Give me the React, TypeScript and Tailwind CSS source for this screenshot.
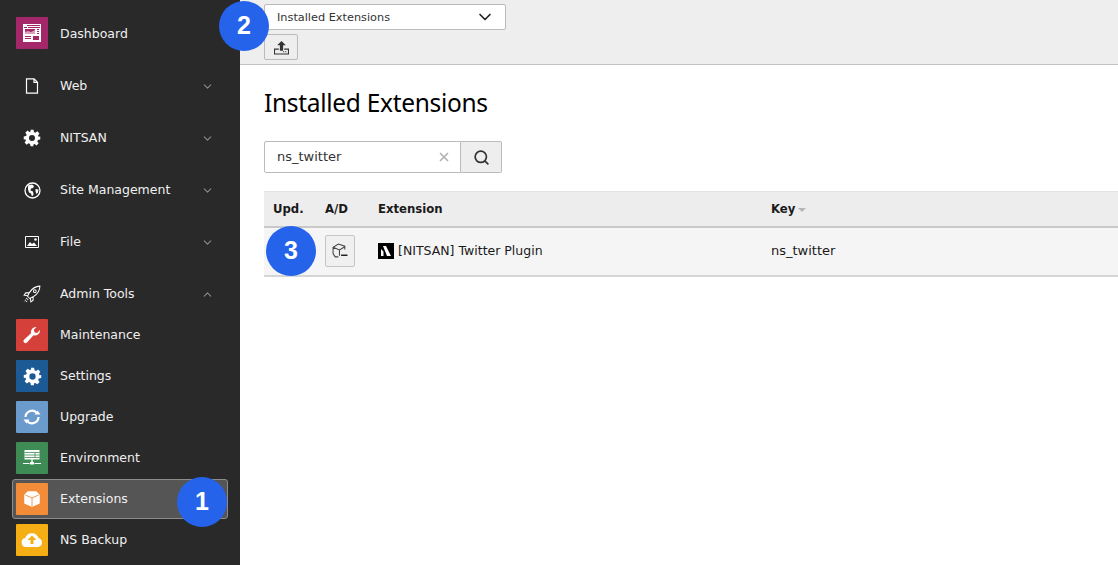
import { ChevronDown, ChevronUp, Search, X } from "lucide-react";
import type { ReactNode } from "react";

const Badge = ({ n, className }: { n: number; className: string }) => (
    <div className={`absolute w-[50px] h-[50px] rounded-full bg-[#2563eb] text-white flex items-center justify-center text-[25px] font-bold font-['Liberation_Sans',sans-serif] ${className}`}>
        {n}
    </div>
);

const Gear = ({ size }: { size: number }) => (
    <svg width={size} height={size} viewBox="0 0 24 24" fill="#fff">
        <path fillRule="evenodd" d="M10 1h4l.6 3.1 1.9.8 2.6-1.8 2.8 2.8-1.8 2.6.8 1.9L23 10v4l-3.1.6-.8 1.9 1.8 2.6-2.8 2.8-2.6-1.8-1.9.8L14 23h-4l-.6-3.1-1.9-.8-2.6 1.8-2.8-2.8 1.8-2.6-.8-1.9L1 14v-4l3.1-.6.8-1.9-1.8-2.6 2.8-2.8 2.6 1.8 1.9-.8zM12 8a4 4 0 1 0 0 8 4 4 0 0 0 0-8z" />
    </svg>
);

const ModuleIcon = ({ bg, children }: { bg: string; children: ReactNode }) => (
    <div className={`w-8 h-8 shrink-0 rounded-[1px] flex items-center justify-center ${bg}`}>{children}</div>
);

const GroupRow = ({ icon, label }: { icon: ReactNode; label: string }) => (
    <div className="h-8 flex items-center mb-5 pl-4 pr-[26px]">
        <div className="w-8 flex items-center justify-center">{icon}</div>
        <span className="ml-3 flex-1">{label}</span>
        <ChevronDown size={13} color="#8a8a8a" />
    </div>
);

const ModuleRow = ({ icon, label, active }: { icon: ReactNode; label: string; active?: boolean }) => (
    <div className={`h-10 flex items-center mb-[1px] rounded-[3px] border pl-[3px] ${active ? "bg-[#555555] border-[#8c8c8c]" : "border-transparent"}`}>
        {icon}
        <span className="ml-3">{label}</span>
    </div>
);

const Sidebar = () => (
    <aside className="w-[240px] shrink-0 bg-[#292929] text-[#f0f0f0] text-[12.5px] font-['DejaVu_Sans',sans-serif] pt-[17px] relative">
        <div className="h-8 flex items-center pl-4 mb-5">
            <ModuleIcon bg="bg-[#a4276a]">
                <svg width="18" height="18" viewBox="0 0 18 18">
                    <path fill="#fff" d="M0 0h18v18H0z" />
                    <path fill="#a4276a" d="M4 1h13v1H4zM1 3h3v1H1zM5 3h12v1H5zM2 5h10v5H2zM14 5h2v1h-2zM14 7h2v1h-2zM14 9h2v1h-2zM2 12h6v1H2zM2 14h6v1H2zM10 12h6v4h-6z" />
                    <path fill="#dba0c0" d="M2 10V8l3-1 3 1 4-2v4z" />
                </svg>
            </ModuleIcon>
            <span className="ml-3 pt-[2px]">Dashboard</span>
        </div>
        <div className="pt-px">
            <GroupRow label="Web" icon={
                <svg width="14" height="16" viewBox="0 0 14 16" fill="none" stroke="#fff" strokeWidth="1.2">
                    <path d="M1.5.8h7.6l3.4 3.4v11H1.500zM9 .8v3.500h3.500" />
                </svg>
            } />
            <GroupRow label="NITSAN" icon={<Gear size={18} />} />
            <GroupRow label="Site Management" icon={
                <svg width="17" height="17" viewBox="0 0 17 17">
                    <circle cx="8.500" cy="8.500" r="7.500" fill="none" stroke="#fff" strokeWidth="1.300" />
                    <path fill="#fff" d="M4 3.500 8 2.500l2 1.500-1 2-2 .5-.5 2 2.500 1 .5 3-1.500 2-1-3-2-1-1-3zM11.500 7l3 .5-.5 3-1.500 1.500-1-2.500z" />
                </svg>
            } />
            <GroupRow label="File" icon={
                <svg width="14" height="12" viewBox="0 0 14 12">
                    <path fill="none" stroke="#fff" strokeWidth="1" d="M.5.5h13v11H.5z" />
                    <path fill="#fff" d="M2 10l3-4 2 2 2-1.500 3 3.500z" />
                    <circle cx="10.500" cy="3.500" r="1.300" fill="#fff" />
                </svg>
            } />
            <div className="h-8 flex items-center pl-4 pr-[26px] mb-[5px]">
                <div className="w-8 flex items-center justify-center">
                    <svg width="18" height="18" viewBox="0 0 16 16" fill="none" stroke="#fff" strokeWidth="0.900">
                        <path d="M15 1c-4 0-7 2-9.500 6L4 10l2 2 3-1.500C13 8 15 5 15 1zM5.500 7H2.500L1 9l3 .5M9 10.500V13.500L7 15l-.5-3" />
                        <circle cx="10.500" cy="5.500" r="1.200" />
                        <path d="M3.500 11.500 1 15M4.500 12.500 3 15" strokeDasharray="1 1" />
                    </svg>
                </div>
                <span className="ml-3 flex-1">Admin Tools</span>
                <ChevronUp size={13} color="#8a8a8a" />
            </div>
        </div>
        <div className="ml-3 mr-3">
            <ModuleRow label="Maintenance" icon={
                <ModuleIcon bg="bg-[#d6403a]">
                    <svg width="20" height="20" viewBox="0 0 20 20">
                        <path fill="#fff" d="M18 5.500a5 5 0 0 1-6.500 4.800L5 17.500a2 2 0 0 1-3-2.800l7-6.500A5 5 0 0 1 14.500 2L11.800 4.800l.8 2.600 2.600.6L17.800 5z" />
                    </svg>
                </ModuleIcon>
            } />
            <ModuleRow label="Settings" icon={<ModuleIcon bg="bg-[#1c5a96]"><Gear size={19} /></ModuleIcon>} />
            <ModuleRow label="Upgrade" icon={
                <ModuleIcon bg="bg-[#6a9bcc]">
                    <svg width="20" height="20" viewBox="0 0 20 20" fill="none" stroke="#fff" strokeWidth="2.200">
                        <path d="M3.500 10a6.500 6.500 0 0 1 11-4.500M16.500 10a6.500 6.500 0 0 1-11 4.500" />
                        <path fill="#fff" stroke="none" d="M12.500 7.500h6l-3-4zM7.500 12.500h-6l3 4z" />
                    </svg>
                </ModuleIcon>
            } />
            <ModuleRow label="Environment" icon={
                <ModuleIcon bg="bg-[#3f8b55]">
                    <svg width="18" height="18" viewBox="0 0 18 18">
                        <path fill="#fff" d="M1.500 1h15v9.500h-15zM8.300 10.500h1.400V13h1.300v2.500H7V13h1.300zM0 14h6.500v1H0zM11.500 14H18v1h-6.500z" />
                        <path stroke="#3f8b55" strokeWidth="0.800" d="M1.500 3.500h15M1.500 6h15M1.500 8.500h15M12 3.500v5" />
                    </svg>
                </ModuleIcon>
            } />
            <ModuleRow active label="Extensions" icon={
                <ModuleIcon bg="bg-[#f28c38]">
                    <svg width="18" height="18" viewBox="0 0 18 18">
                        <path fill="#fff" stroke="#fff" strokeWidth="1.500" strokeLinejoin="round" d="M5 2h8l3 3v8l-7 3-7-3V5z" />
                        <path fill="none" stroke="#f28c38" strokeWidth="0.900" d="M2.500 5 9 8l6.500-3M9 8v8" />
                    </svg>
                </ModuleIcon>
            } />
            <ModuleRow label="NS Backup" icon={
                <ModuleIcon bg="bg-[#f5ae14]">
                    <svg width="22" height="16" viewBox="0 0 22 16">
                        <path fill="#fff" d="M5 15a4.500 4.500 0 0 1-.8-8.900A7 7 0 0 1 17.500 6a4.600 4.600 0 0 1-.5 9z" />
                        <path fill="#f5ae14" d="M11 3.500 15.500 8h-3v4h-3V8h-3z" />
                    </svg>
                </ModuleIcon>
            } />
        </div>
        <Badge n={1} className="left-[177px] top-[477px]" />
    </aside>
);

export default function App() {
    return (
        <div className="w-[1118px] h-[565px] flex overflow-hidden bg-white font-['DejaVu_Sans',sans-serif] text-[13px] text-[#1a1a1a]">
            <Sidebar />
            <main className="flex-1 min-w-0 relative">
                <div className="h-[65px] bg-[#eeeeee] border-b border-[#c3c3c3] pl-6 pt-1">
                    <div className="w-[242px] h-[26px] bg-white border border-[#bbbbbb] rounded-[2px] flex items-center justify-between pl-3 pr-[10px] text-[11.3px] text-[#333333]">
                        <span className="pt-[2px]">Installed Extensions</span>
                        <ChevronDown size={20} color="#222" strokeWidth={2} />
                    </div>
                    <button className="mt-1 w-[34px] h-[26px] bg-[#eeeeee] border border-[#bbbbbb] rounded-[2px] flex items-center justify-center">
                        <svg width="15" height="15" viewBox="0 0 14 14" fill="none" stroke="#333" strokeWidth="1">
                            <path d="M4.500 8.500H.5v4.500h13V8.500h-4M10.500 11h1M8.500 11h1" />
                            <path fill="#333" stroke="none" d="M7 1 11 5H8.500v5h-3V5H3z" />
                        </svg>
                    </button>
                </div>
                <div className="pl-6 pt-[21px]">
                    <h1 className="text-[24.500px] tracking-[-0.3px] leading-[34px] font-['Noto_Sans',sans-serif] text-black">Installed Extensions</h1>
                    <div className="mt-[21px] flex w-[238px] h-8">
                        <div className="flex-1 bg-white border border-[#bbbbbb] rounded-l-[2px] flex items-center pl-3 pr-[9px] justify-between text-[13px] text-[#333333]">
                            <span>ns_twitter</span>
                            <X size={14} color="#b5b5b5" strokeWidth={3} />
                        </div>
                        <div className="w-[41px] bg-[#eeeeee] border border-l-0 border-[#bbbbbb] rounded-r-[2px] flex items-center justify-center">
                            <Search size={17} color="#333" strokeWidth={2.4} />
                        </div>
                    </div>
                    <table className="mt-[18px] w-[854px] border-collapse text-left">
                        <thead>
                            <tr className="h-[35px] bg-[#ededed] border-t border-[#e3e3e3] border-b-2 border-b-[#c8c8c8]">
                                <th className="w-[51px] pl-[9px] pt-[3px] font-bold text-[11.7px] text-[#1a1a1a]">Upd.</th>
                                <th className="w-[63px] pl-[10px] pt-[3px] font-bold text-[11.7px]">A/D</th>
                                <th className="w-[393px] pt-[3px] font-bold text-[11.7px]">Extension</th>
                                <th className="pt-[3px] font-bold text-[11.7px]">
                                    <span className="flex items-center gap-[3px]">
                                        Key
                                        <span className="w-0 h-0 border-x-4 border-x-transparent border-t-[4px] border-t-[#b5b5b5]" />
                                    </span>
                                </th>
                            </tr>
                        </thead>
                        <tbody>
                            <tr className="h-[49px] bg-[#f5f5f5] border-b-2 border-b-[#d5d5d5]">
                                <td />
                                <td className="pl-[10px]">
                                    <button className="w-[30px] h-8 bg-[#f0f0f0] border border-[#c5c5c5] rounded-[2px] flex items-center justify-center">
                                        <svg width="16" height="16" viewBox="0 0 15 15" fill="none" stroke="#444" strokeWidth="1">
                                            <path d="M6 13H3L1 10V4l5-3 6 2v3M1 4l6 2.500 5-3M7 6.500V12" />
                                            <path stroke="#222" strokeWidth="1.400" d="M8.500 11.500h6" />
                                        </svg>
                                    </button>
                                </td>
                                <td className="text-[12.5px]">
                                    <span className="flex items-center gap-1">
                                        <svg width="16" height="16" viewBox="0 0 16 16">
                                            <path fill="#000" d="M0 0h16v16H0z" />
                                            <path fill="#fff" d="M3 6l2.500 2.500V13H3zM5 3h3l5 10H9z" />
                                        </svg>
                                        <span className="pt-px">[NITSAN] Twitter Plugin</span>
                                    </span>
                                </td>
                                <td>ns_twitter</td>
                            </tr>
                        </tbody>
                    </table>
                </div>
                <Badge n={2} className="left-[-21px] top-[1px]" />
                <Badge n={3} className="left-[26px] top-[226px]" />
            </main>
        </div>
    );
}
